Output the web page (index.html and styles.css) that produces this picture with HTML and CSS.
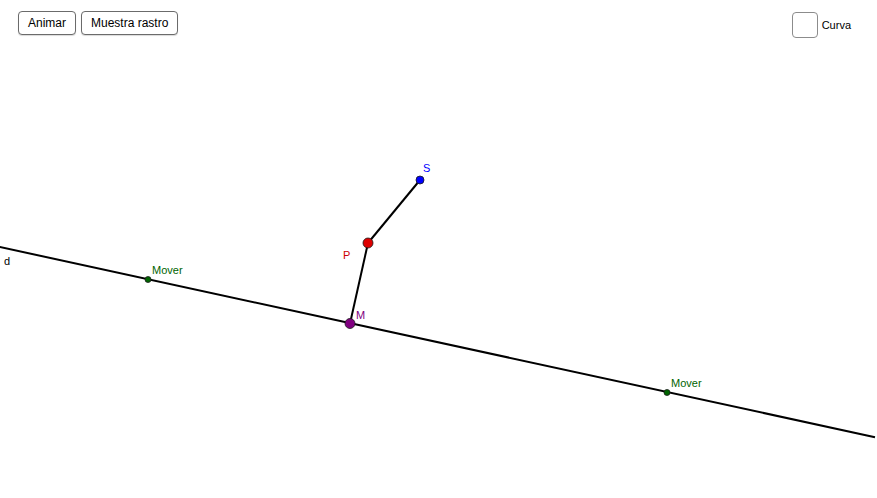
FILE: index.html
```html
<!DOCTYPE html>
<html lang="es">
<head>
<meta charset="utf-8">
<title>Construcción</title>
<link rel="stylesheet" href="styles.css">
</head>
<body>
<div class="app">
  <svg class="canvas" width="877" height="498" viewBox="0 0 877 498" xmlns="http://www.w3.org/2000/svg">
    <line x1="-2" y1="246.6" x2="875" y2="437.2" stroke="#000" stroke-width="2"/>
    <line x1="420" y1="180" x2="368" y2="243" stroke="#000" stroke-width="2"/>
    <line x1="368" y1="243" x2="350" y2="323.5" stroke="#000" stroke-width="2"/>
    <circle cx="148" cy="279.5" r="3" fill="#006400" stroke="#1a1a1a" stroke-width="0.8"/>
    <circle cx="667" cy="392.5" r="3" fill="#006400" stroke="#1a1a1a" stroke-width="0.8"/>
    <circle cx="420" cy="180" r="4" fill="#0000ff" stroke="#1a1a1a" stroke-width="0.8"/>
    <circle cx="368" cy="243" r="5" fill="#dd0000" stroke="#1a1a1a" stroke-width="0.8"/>
    <circle cx="350" cy="323.5" r="5" fill="#800080" stroke="#1a1a1a" stroke-width="0.8"/>
    <text class="lbl" x="4" y="265" fill="#000">d</text>
    <text class="lbl" x="152" y="274" fill="#006400">Mover</text>
    <text class="lbl" x="671" y="387" fill="#006400">Mover</text>
    <text class="lbl" x="423" y="172" fill="#0000ff">S</text>
    <text class="lbl" x="343" y="259" fill="#cc0000">P</text>
    <text class="lbl" x="356" y="319" fill="#800080">M</text>
  </svg>
  <div class="toolbar">
    <div class="buttons">
      <button class="btn">Animar</button>
      <button class="btn">Muestra rastro</button>
    </div>
    <label class="check">
      <span class="box"></span>
      <span class="check-text">Curva</span>
    </label>
  </div>
</div>
</body>
</html>
```

FILE: styles.css
```css
html, body {
  margin: 0;
  padding: 0;
  background: #fff;
}
.app {
  position: relative;
  width: 877px;
  height: 498px;
  overflow: hidden;
  font-family: "Liberation Sans", Arial, sans-serif;
}
.canvas {
  position: absolute;
  left: 0;
  top: 0;
}
.lbl {
  font-family: "Liberation Sans", Arial, sans-serif;
  font-size: 11px;
}
.toolbar {
  position: relative;
  display: flex;
  justify-content: space-between;
  align-items: flex-start;
  padding: 11px 26px 0 18px;
}
.buttons {
  display: flex;
  gap: 5px;
}
.btn {
  box-sizing: border-box;
  height: 24px;
  padding: 0 9px;
  margin: 0;
  background: #fff;
  border: 1px solid #6b6b6b;
  border-radius: 4px;
  font-family: "Liberation Sans", Arial, sans-serif;
  font-size: 12px;
  color: #000;
  box-shadow: 0 1px 1px rgba(0,0,0,0.15);
}
.check {
  display: flex;
  align-items: center;
  gap: 4px;
  padding-top: 1px;
}
.box {
  box-sizing: border-box;
  width: 26px;
  height: 26px;
  border: 1.5px solid #8c8c8c;
  border-radius: 4px;
  background: #fff;
}
.check-text {
  font-size: 11px;
  color: #000;
}
```
